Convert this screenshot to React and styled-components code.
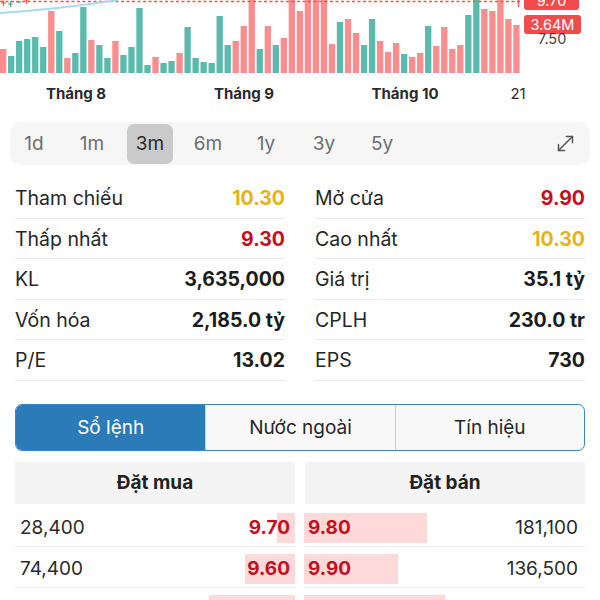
import React from "react";
import styled, { createGlobalStyle } from "styled-components";

const GlobalStyle = createGlobalStyle`
  html, body { margin: 0; padding: 0; background: #fff; }
  body {
    font-family: Inter, "Noto Sans", "Liberation Sans", sans-serif;
    color: #222;
    -webkit-font-smoothing: antialiased;
  }
  * { box-sizing: border-box; }
`;

const Page = styled.div`
  width: 600px;
  height: 600px;
  overflow: hidden;
  background: #fff;
`;

/* ---------- chart ---------- */
const ChartWrap = styled.div`
  position: relative;
  height: 75px;
`;

const ChartSvg = styled.svg`
  display: block;
`;

const PriceTag = styled.div`
  position: absolute;
  left: 524px;
  top: ${(p) => p.$top}px;
  width: ${(p) => p.$w}px;
  height: ${(p) => p.$h}px;
  background: #f24b4b;
  color: #fff;
  border-radius: 3px;
  font-size: 14.5px;
  line-height: ${(p) => p.$h}px;
  text-align: center;
`;

const AxisPrice = styled.div`
  position: absolute;
  left: 538px;
  top: 31px;
  font-size: 14.5px;
  line-height: 16px;
  color: #444;
`;

const Axis = styled.div`
  position: relative;
  height: 30px;
`;

const AxisLabel = styled.span`
  position: absolute;
  top: 8px;
  line-height: 22px;
  transform: translateX(-50%);
  font-size: 15px;
  font-weight: ${(p) => (p.$bold ? 700 : 400)};
  color: #2a2a2a;
  white-space: nowrap;
`;

/* ---------- range bar ---------- */
const RangeBar = styled.div`
  margin: 17px 10px 0;
  height: 43px;
  background: #f6f6f6;
  border-radius: 10px;
  display: flex;
  align-items: center;
  gap: 12px;
  padding: 0 14px 0 1px;
`;

const RangeBtn = styled.button`
  width: 46px;
  height: 40px;
  padding: 0;
  border: 0;
  border-radius: 7px;
  background: ${(p) => (p.$active ? "#cacaca" : "transparent")};
  color: ${(p) => (p.$active ? "#2a2a2a" : "#6e6e6e")};
  font-family: Inter, "Noto Sans", sans-serif;
  font-size: 19px;
  font-weight: 400;
`;

const ExpandBtn = styled.button`
  margin-left: auto;
  width: 22px;
  height: 22px;
  padding: 0;
  border: 0;
  background: transparent;
  display: flex;
  align-items: center;
  justify-content: center;
  color: #555;
`;

/* ---------- stats ---------- */
const StatsGrid = styled.div`
  margin: 13px 15px 0;
  display: grid;
  grid-template-columns: 1fr 1fr;
  column-gap: 30px;
`;

const StatRow = styled.div`
  height: 40.5px;
  display: flex;
  align-items: center;
  justify-content: space-between;
  border-bottom: 1px solid #ececec;
  font-size: 19.5px;
  padding-top: 1px;
`;

const StatLabel = styled.span`
  color: #262626;
  font-weight: 400;
`;

const StatValue = styled.span`
  font-weight: 700;
  color: ${(p) => p.$color || "#1c1c1c"};
`;

/* ---------- segmented tabs ---------- */
const Segment = styled.div`
  margin: 23px 15px 0;
  height: 47px;
  display: grid;
  grid-template-columns: repeat(3, 1fr);
  border: 1px solid #3a85c4;
  border-radius: 7px;
  overflow: hidden;
  background: #f8f8f8;
`;

const SegTab = styled.div`
  display: flex;
  align-items: center;
  justify-content: center;
  font-size: 19px;
  color: ${(p) => (p.$active ? "#fff" : "#262626")};
  background: ${(p) => (p.$active ? "#2b7bb9" : "transparent")};
  border-left: ${(p) => (p.$first ? "0" : "1px solid #cfcfcf")};
`;

/* ---------- order book ---------- */
const Book = styled.div`
  margin: 11px 15px 0;
  display: grid;
  grid-template-columns: 1fr 1fr;
  column-gap: 10px;
`;

const BookCol = styled.div`
  display: flex;
  flex-direction: column;
`;

const BookHead = styled.div`
  height: 42px;
  margin-bottom: 2px;
  background: #f4f4f4;
  display: flex;
  align-items: center;
  justify-content: center;
  font-size: 19px;
  font-weight: 700;
  color: #222;
`;

const BookRow = styled.div`
  position: relative;
  height: 41px;
  display: flex;
  align-items: center;
  justify-content: space-between;
  padding: ${(p) => (p.$side === "buy" ? "4px 5px 0 5px" : "4px 7px 0 3px")};
  border-bottom: 1px solid #ededed;
  font-size: 19px;
`;

const DepthBar = styled.div`
  position: absolute;
  top: 7px;
  height: 30px;
  background: #fdd9da;
  ${(p) => (p.$side === "buy" ? "right: 0;" : "left: -1px;")}
`;

const Volume = styled.span`
  position: relative;
  color: #2a2a2a;
`;

const Price = styled.span`
  position: relative;
  font-weight: 700;
  color: #c3101c;
`;

/* ---------- data ---------- */
const BARS = "r49 t56 t41 t39 t37 t47 r11 t31 r58 t53 t7 r40 t45 t58 r41 t55 t47 t8 t65 r57 t63 t61 r53 t27 t58 t62 t63 t16 t45 r41 r26 r0 t49 r26 t45 r38 r0 r11 r0 r0 r0 r44 t22 r19 r33 t45 t19 r41 r52 r43 t54 r57 r53 t26 r46 r27 r49 r45 t15 t0 r9 r11 r0 r19 r25"
  .split(" ")
  .map((s) => ({ c: s[0], y: +s.slice(1) }));

const RANGES = ["1d", "1m", "3m", "6m", "1y", "3y", "5y"];

const STATS = [
  ["Tham chiếu", "10.30", "#e6b21c", "Mở cửa", "9.90", "#c3101c"],
  ["Thấp nhất", "9.30", "#c3101c", "Cao nhất", "10.30", "#e6b21c"],
  ["KL", "3,635,000", null, "Giá trị", "35.1 tỷ", null],
  ["Vốn hóa", "2,185.0 tỷ", null, "CPLH", "230.0 tr", null],
  ["P/E", "13.02", null, "EPS", "730", null],
];

const BUY = [
  ["28,400", "9.70", 18],
  ["74,400", "9.60", 50],
  ["25,300", "9.50", 86],
];
const SELL = [
  ["9.80", "181,100", 123],
  ["9.90", "136,500", 94],
  ["10.00", "198,000", 141],
];

function Chart() {
  return (
    <ChartWrap>
      <ChartSvg width="600" height="75" viewBox="0 0 600 75">
        {BARS.map((b, i) => (
          <rect
            key={i}
            x={i * 8.02}
            y={b.y}
            width="6.3"
            height={73 - b.y}
            fill={b.c === "r" ? "#fa8e8e" : "#5bbaae"}
          />
        ))}
        <line x1="0" y1="1.5" x2="522" y2="1.5" stroke="#f25555" strokeWidth="1.3" strokeDasharray="3 2.5" />
        <path d="M0 13 Q 60 9 118 0" fill="none" stroke="#a9d9ec" strokeWidth="2" />
        <path d="M1 3 H6 M3.5 0.5 V6" stroke="#f25555" strokeWidth="1.2" />
        <path d="M8 4 H13 M10.5 1 V7" stroke="#3fa89a" strokeWidth="1.2" />
        <path d="M16 2 H21" stroke="#3fa89a" strokeWidth="1.2" />
        <path d="M24 1 H29 M26.5 0 V4" stroke="#f25555" strokeWidth="1.2" />
        <line x1="518.5" y1="0" x2="518.5" y2="7" stroke="#f25555" strokeWidth="1.5" />
      </ChartSvg>
      <PriceTag $top={-8} $w={55} $h={18}>9.70</PriceTag>
      <PriceTag $top={15} $w={57} $h={19}>3.64M</PriceTag>
      <AxisPrice>7.50</AxisPrice>
    </ChartWrap>
  );
}

function ExpandIcon() {
  return (
    <svg width="21" height="21" viewBox="0 0 24 24" fill="none" stroke="currentColor" strokeWidth="1.7" strokeLinecap="round" strokeLinejoin="round">
      <polyline points="13 4 20 4 20 11" />
      <polyline points="11 20 4 20 4 13" />
      <line x1="20" y1="4" x2="4" y2="20" />
    </svg>
  );
}

export default function App() {
  return (
    <Page>
      <GlobalStyle />
      <Chart />
      <Axis>
        <AxisLabel $bold style={{ left: 76 }}>Tháng 8</AxisLabel>
        <AxisLabel $bold style={{ left: 244 }}>Tháng 9</AxisLabel>
        <AxisLabel $bold style={{ left: 405 }}>Tháng 10</AxisLabel>
        <AxisLabel style={{ left: 518 }}>21</AxisLabel>
      </Axis>

      <RangeBar>
        {RANGES.map((r) => (
          <RangeBtn key={r} $active={r === "3m"}>{r}</RangeBtn>
        ))}
        <ExpandBtn aria-label="expand">
          <ExpandIcon />
        </ExpandBtn>
      </RangeBar>

      <StatsGrid>
        {STATS.map(([l1, v1, c1, l2, v2, c2]) => (
          <React.Fragment key={l1}>
            <StatRow>
              <StatLabel>{l1}</StatLabel>
              <StatValue $color={c1}>{v1}</StatValue>
            </StatRow>
            <StatRow>
              <StatLabel>{l2}</StatLabel>
              <StatValue $color={c2}>{v2}</StatValue>
            </StatRow>
          </React.Fragment>
        ))}
      </StatsGrid>

      <Segment>
        <SegTab $active $first>Sổ lệnh</SegTab>
        <SegTab>Nước ngoài</SegTab>
        <SegTab>Tín hiệu</SegTab>
      </Segment>

      <Book>
        <BookCol>
          <BookHead>Đặt mua</BookHead>
          {BUY.map(([vol, price, w]) => (
            <BookRow key={price} $side="buy">
              <DepthBar $side="buy" style={{ width: w }} />
              <Volume>{vol}</Volume>
              <Price>{price}</Price>
            </BookRow>
          ))}
        </BookCol>
        <BookCol>
          <BookHead>Đặt bán</BookHead>
          {SELL.map(([price, vol, w]) => (
            <BookRow key={price} $side="sell">
              <DepthBar $side="sell" style={{ width: w }} />
              <Price>{price}</Price>
              <Volume>{vol}</Volume>
            </BookRow>
          ))}
        </BookCol>
      </Book>
    </Page>
  );
}
